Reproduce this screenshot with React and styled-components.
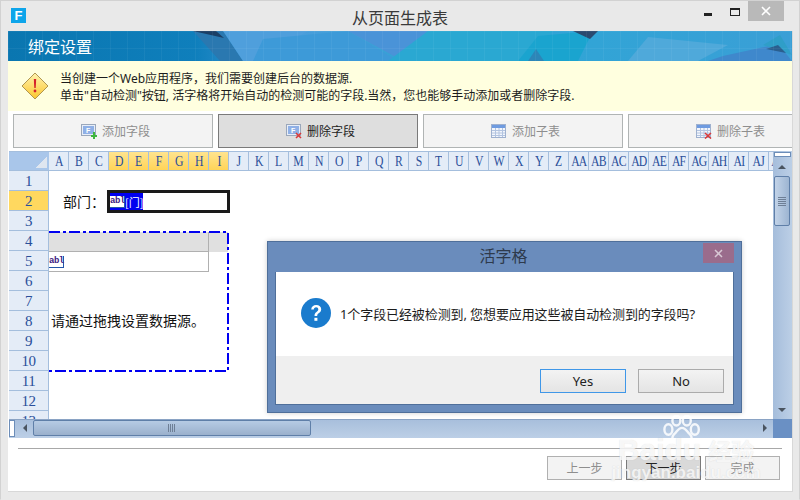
import React from "react";
import styled, { createGlobalStyle } from "styled-components";

const GlobalStyle = createGlobalStyle`
  html, body { margin: 0; padding: 0; background: #e9e9e9; }
  body { font-family: "Noto Sans", "Noto Sans CJK SC", sans-serif; }
  * { box-sizing: border-box; }
`;

const COLUMNS = "ABCDEFGHIJKLMNOPQRSTUVWXYZ"
  .split("")
  .concat(["AA", "AB", "AC", "AD", "AE", "AF", "AG", "AH", "AI", "AJ", "AK"]);
const HOT_COLUMNS = ["D", "E", "F", "G", "H", "I"];
const ROWS = [1, 2, 3, 4, 5, 6, 7, 8, 9, 10, 11, 12, 13];

const FormIcon = ({ badge }) => (
  <svg width="16" height="15" viewBox="0 0 16 15">
    <rect x="0.5" y="0.5" width="14" height="11" fill="#e8eef8" stroke="#9aa7bb" />
    <rect x="2" y="2" width="11" height="8" fill="#8fb0e6" />
    <text x="5" y="9" fontSize="7" fontWeight="700" fill="#fff" fontFamily="Liberation Sans">F</text>
    {badge === "add" && <path d="M10 11h2V8h2v3h2v2h-2v2h-2v-2h-2z" fill="#3fb53f" />}
    {badge === "del" && <path d="M10 9l5 5M15 9l-5 5" stroke="#d93a3a" strokeWidth="1.6" />}
  </svg>
);

const TableIcon = ({ badge }) => (
  <svg width="16" height="15" viewBox="0 0 16 15">
    <rect x="0.5" y="0.5" width="14" height="13" fill="#f3f6fc" stroke="#9fb1cf" />
    <rect x="1" y="1" width="13" height="3" fill="#6f9be0" />
    <path d="M1 6.5h13M1 9h13M1 11.5h13M4.5 4v9M8 4v9M11.5 4v9" stroke="#b3c4e0" />
    {badge === "del" && <path d="M9 9l6 5.5M15 9l-6 5.5" stroke="#d93a3a" strokeWidth="1.6" />}
  </svg>
);

const TOOLS = [
  { label: "添加字段", icon: <FormIcon badge="add" /> },
  { label: "删除字段", icon: <FormIcon badge="del" />, active: true },
  { label: "添加子表", icon: <TableIcon /> },
  { label: "删除子表", icon: <TableIcon badge="del" /> },
];

const Ab = () => <AbBox>abl</AbBox>;

const App = () => (
  <Frame>
    <GlobalStyle />
    <TitleBar>
      <Logo>F</Logo>
      <Title>从页面生成表</Title>
      <MinButton />
      <MaxButton />
      <CloseButton>
        <svg width="10" height="10" viewBox="0 0 10 10">
          <path d="M1 1l8 8M9 1l-8 8" stroke="#fff" strokeWidth="1.6" />
        </svg>
      </CloseButton>
    </TitleBar>

    <Panel>
      <Banner>
        <BannerArt viewBox="0 0 784 30" preserveAspectRatio="none">
          <defs>
            <linearGradient id="bannerBase" x1="0" x2="1" y1="0" y2="0">
              <stop offset="0" stopColor="#0a76b0" />
              <stop offset="0.24" stopColor="#0f7fbc" />
              <stop offset="0.36" stopColor="#4c9ddb" />
              <stop offset="0.55" stopColor="#2ea3d4" />
              <stop offset="0.75" stopColor="#32a4d6" />
              <stop offset="1" stopColor="#3a9fd6" />
            </linearGradient>
            <pattern id="bannerGrid" width="17" height="17" patternUnits="userSpaceOnUse">
              <path d="M17 0H0V17" fill="none" stroke="#fff" strokeOpacity="0.09" />
            </pattern>
          </defs>
          <rect width="784" height="30" fill="url(#bannerBase)" />
          <polygon points="185,0 215,0 235,30 212,30" fill="#2a78b0" />
          <polygon points="185,0 208,0 216,7" fill="#1b3f66" />
          <polygon points="215,0 300,0 250,30 235,30" fill="#4f9fdc" />
          <polygon points="255,8 340,0 390,30 245,30" fill="#3d9ad8" />
          <polygon points="340,0 420,0 395,30" fill="#4a93d8" />
          <polygon points="420,0 545,0 515,30 380,30" fill="#2aa8d2" />
          <polygon points="530,5 585,0 570,30 510,30" fill="#1aa4cf" />
          <polygon points="565,0 590,0 582,8" fill="#2b4a6f" />
          <polygon points="640,6 720,14 690,30 620,30" fill="#4fa9da" />
          <polygon points="715,25 770,13 784,30 700,30" fill="#3f88cc" />
          <polygon points="755,14 772,4 784,24" fill="#2f9ec8" />
          <polygon points="758,18 770,14 778,22" fill="#2a5f8f" />
          <polygon points="520,30 528,18 536,30" fill="#2c86b8" />
          <rect width="784" height="30" fill="url(#bannerGrid)" />
        </BannerArt>
        <BannerTitle>绑定设置</BannerTitle>
      </Banner>

      <Notice>
        <svg width="28" height="28" viewBox="0 0 28 28">
          <defs>
            <linearGradient id="warn" x1="0" x2="0" y1="0" y2="1">
              <stop offset="0" stopColor="#fff3b0" />
              <stop offset="1" stopColor="#fbc62e" />
            </linearGradient>
          </defs>
          <polygon points="14,1 27,14 14,27 1,14" fill="url(#warn)" stroke="#b09650" />
          <path d="M12.8 7h2.4l-.5 9h-1.4z" fill="#d5202a" />
          <circle cx="14" cy="19" r="1.4" fill="#d5202a" />
        </svg>
        <NoticeText>
          <span>当创建一个Web应用程序，我们需要创建后台的数据源.</span>
          <span>单击"自动检测"按钮, 活字格将开始自动的检测可能的字段.当然，您也能够手动添加或者删除字段.</span>
        </NoticeText>
      </Notice>

      <Toolbar>
        {TOOLS.map((tool) => (
          <ToolButton key={tool.label} $active={tool.active}>
            {tool.icon}
            {tool.label}
          </ToolButton>
        ))}
      </Toolbar>

      <Sheet>
        <SheetMain>
          <ColumnBar>
            <Corner />
            {COLUMNS.map((c) => (
              <ColumnHead key={c} $hot={HOT_COLUMNS.includes(c)}>
                <ColumnName>{c}</ColumnName>
              </ColumnHead>
            ))}
          </ColumnBar>
          <SheetBody>
            {ROWS.map((r) => (
              <RowHead key={r} $row={r} $hot={r === 2}>
                {r}
              </RowHead>
            ))}
            <FieldLabel>部门：</FieldLabel>
            <FieldBox>
              <FieldSelection>
                <Ab />
                <span>[门]</span>
              </FieldSelection>
            </FieldBox>
            <DropZone>
              <DropOutline width="180" height="141" viewBox="0 0 180 141">
                <path d="M0 1H179V140H0" fill="none" stroke="#0000f0" strokeWidth="2" strokeDasharray="11 3 3 3" />
              </DropOutline>
              <TableHeadRow>
                <TableHeadCell />
              </TableHeadRow>
              <TableBodyRow>
                <Ab />
              </TableBodyRow>
              <DropHint>请通过拖拽设置数据源。</DropHint>
            </DropZone>
          </SheetBody>
        </SheetMain>

        <VScroll>
          <VGrip />
          <TriangleUp />
          <VThumb>
            <GripLines />
          </VThumb>
          <TriangleDown />
        </VScroll>

        <HScroll>
          <HGrip />
          <TriangleLeft />
          <HThumb>
            <GripBars />
          </HThumb>
          <TriangleRight />
        </HScroll>
        <ScrollCorner />
      </Sheet>

      <Footer>
        <FooterRule />
        <FooterButtons>
          <StepButton>上一步</StepButton>
          <StepButton $active>下一步</StepButton>
          <StepButton>完成</StepButton>
        </FooterButtons>
      </Footer>
    </Panel>

    <Dialog>
      <DialogTitle>
        活字格
        <DialogClose>
          <svg width="9" height="9" viewBox="0 0 9 9">
            <path d="M1 1l7 7M8 1l-7 7" stroke="#d8c8d4" strokeWidth="1.5" />
          </svg>
        </DialogClose>
      </DialogTitle>
      <DialogBody>
        <DialogMessage>
          <svg width="30" height="30" viewBox="0 0 30 30">
            <circle cx="15" cy="15" r="15" fill="#1a7bcd" />
            <path d="M10.2 11.6c.2-3 2.2-4.6 5-4.6 3 0 5 1.700 5 4.200 0 2-1.100 3-2.500 4-1.200.9-1.500 1.400-1.500 2.800h-2.700c0-2.100.5-3 2-4.100 1.200-.9 1.800-1.500 1.800-2.600 0-1.200-.9-2-2.200-2-1.400 0-2.200.9-2.300 2.300z" fill="#fff" />
            <rect x="13.400" y="19.800" width="3" height="3" fill="#fff" />
          </svg>
          <span>1个字段已经被检测到, 您想要应用这些被自动检测到的字段吗?</span>
        </DialogMessage>
        <DialogActions>
          <DialogButton $primary>Yes</DialogButton>
          <DialogButton>No</DialogButton>
        </DialogActions>
      </DialogBody>
    </Dialog>

    <Watermark>
      <WatermarkPaw width="40" height="29" viewBox="0 0 50 36">
        <g fill="none" stroke="#fff" strokeOpacity="0.85" strokeWidth="3">
          <ellipse cx="8" cy="18" rx="5" ry="6.500" />
          <ellipse cx="18" cy="7" rx="5" ry="6" />
          <ellipse cx="31" cy="7" rx="5" ry="6" />
          <ellipse cx="41" cy="18" rx="5" ry="6.500" />
          <path d="M25 16c-5 0-6 5-10 8-4 4-1 11 5 9 3-1 7-1 10 0 6 2 9-5 5-9-4-3-5-8-10-8z" />
        </g>
      </WatermarkPaw>
      <WatermarkBrand>
        Baidu<WatermarkCn>经验</WatermarkCn>
      </WatermarkBrand>
      <WatermarkUrl>jingyan.baidu.com</WatermarkUrl>
    </Watermark>
  </Frame>
);

export default App;

const Frame = styled.div`
  position: relative;
  width: 800px;
  height: 500px;
  overflow: hidden;
  display: flex;
  flex-direction: column;
  background: #e9e9e9;
  border: 1px solid #d2d2d2;
  border-bottom-color: #e9e9e9;
`;

const TitleBar = styled.div`
  position: relative;
  flex: none;
  height: 30px;
  display: flex;
  align-items: flex-start;
`;

const Logo = styled.div`
  width: 15px;
  height: 15px;
  margin: 7px 0 0 10px;
  background: #0ea5ea;
  color: #fff;
  font: 700 13px/15px "Liberation Sans", sans-serif;
  text-align: center;
`;

const Title = styled.div`
  position: absolute;
  left: 351px;
  top: 4px;
  font: 16px/24px "Noto Sans CJK SC", sans-serif;
  color: #3a3a3a;
`;

const MinButton = styled.div`
  margin: 12px 0 0 678px;
  width: 8px;
  height: 3px;
  background: #222;
`;

const MaxButton = styled.div`
  margin: 7px 0 0 18px;
  width: 10px;
  height: 8px;
  border: 1px solid #222;
  border-top-width: 2px;
`;

const CloseButton = styled.div`
  margin-left: 8px;
  width: 36px;
  height: 20px;
  background: #b9b9b9;
  display: flex;
  align-items: center;
  justify-content: center;
`;

const Panel = styled.div`
  flex: none;
  width: 785px;
  height: 461px;
  margin-left: 7px;
  background: #fff;
  border-bottom: 1px solid #d8d8d8;
  border-right: 1px solid #d8d8d8;
  display: flex;
  flex-direction: column;
`;

const Banner = styled.div`
  position: relative;
  flex: none;
  height: 30px;
  display: flex;
  align-items: center;
  padding-left: 20px;
`;

const BannerArt = styled.svg`
  position: absolute;
  inset: 0;
  width: 100%;
  height: 100%;
`;

const BannerTitle = styled.div`
  position: relative;
  font: 16px/24px "Noto Sans CJK SC", sans-serif;
  color: #fff;
`;

const Notice = styled.div`
  flex: none;
  height: 50px;
  background: #ffffdf;
  display: flex;
  align-items: center;
  gap: 11px;
  padding: 0 0 0 13px;
`;

const NoticeText = styled.div`
  display: flex;
  flex-direction: column;
  padding-top: 2px;
  font-size: 12px;
  line-height: 17px;
  color: #1c1c1c;
  white-space: nowrap;
`;

const Toolbar = styled.div`
  flex: none;
  display: flex;
  gap: 5px;
  padding: 3px 0 0 5px;
  height: 40px;
  overflow: hidden;
`;

const ToolButton = styled.div`
  flex: none;
  width: 200px;
  height: 34px;
  padding-left: 5px;
  display: flex;
  align-items: center;
  justify-content: center;
  gap: 5px;
  font: 12px/16px "Noto Sans CJK SC", sans-serif;
  color: ${({ $active }) => ($active ? "#222" : "#8e8e8e")};
  background: ${({ $active }) => ($active ? "#dedede" : "#f3f3f3")};
  border: 1px solid ${({ $active }) => ($active ? "#7a7a7a" : "#b0b4b4")};
`;

const Sheet = styled.div`
  flex: none;
  display: grid;
  grid-template-columns: 764px 19px;
  grid-template-rows: 268px 19px;
  width: 783px;
  margin-left: 1px;
`;

const SheetMain = styled.div`
  overflow: hidden;
  display: flex;
  flex-direction: column;
`;

const ColumnBar = styled.div`
  flex: none;
  display: flex;
  height: 20px;
  border-top: 1px solid #a4bedd;
`;

const Corner = styled.div`
  flex: none;
  width: 40px;
  height: 19px;
  background: linear-gradient(135deg, transparent 50%, #dfe6f0 50%) no-repeat right 2px bottom 2px / 12px 12px,
    #a9c6ea;
  border-bottom: 1px solid #a4bedd;
`;

const ColumnHead = styled.div`
  flex: none;
  width: 20px;
  height: 19px;
  display: flex;
  justify-content: center;
  background: ${({ $hot }) => ($hot ? "linear-gradient(#ffe48f, #ffd458)" : "#e4ecf7")};
  border-right: 1px solid #a4bedd;
  border-bottom: 1px solid #a4bedd;
`;

const ColumnName = styled.span`
  flex: none;
  font: 15px/18px "Liberation Serif", serif;
  letter-spacing: -1px;
  color: #2a4f9a;
  transform: scaleX(0.78);
`;

const SheetBody = styled.div`
  flex: 1;
  display: grid;
  grid-template-columns: 40px repeat(36, 20px);
  grid-auto-rows: 20px;
  overflow: hidden;
`;

const RowHead = styled.div`
  grid-column: 1;
  grid-row: ${({ $row }) => $row};
  text-align: center;
  font: 15px/20px "Liberation Serif", serif;
  letter-spacing: -0.5px;
  color: #2a4f9a;
  background: ${({ $hot }) => ($hot ? "#ffd85f" : "#e4ecf7")};
  border-right: 1px solid #a4bedd;
  border-bottom: 1px solid #a4bedd;
`;

const FieldLabel = styled.div`
  grid-column: 2 / span 3;
  grid-row: 2;
  padding-left: 14px;
  font: 14px/20px "Noto Sans CJK SC", sans-serif;
  color: #111;
  white-space: nowrap;
`;

const FieldBox = styled.div`
  grid-column: 5 / span 6;
  grid-row: 2;
  margin: -1px -1px -2px -2px;
  display: flex;
  align-items: center;
  border: 3px solid #1a1a1a;
  background: #fff;
`;

const FieldSelection = styled.div`
  display: flex;
  align-items: center;
  height: 17px;
  background: #0000f0;
  color: #fff;
  font: 11px/16px "Noto Sans CJK SC", sans-serif;
  white-space: nowrap;
`;

const AbBox = styled.span`
  display: inline-block;
  flex: none;
  height: 12px;
  width: 15px;
  text-align: center;
  background: #fff;
  border-right: 1px solid #2456a8;
  border-bottom: 1px solid #2456a8;
  color: #3d1a80;
  font: 700 9px/11px "Liberation Mono", monospace;
  letter-spacing: -0.5px;
`;

const DropZone = styled.div`
  position: relative;
  grid-column: 2 / span 9;
  grid-row: 4 / span 7;
  height: 141px;
  display: flex;
  flex-direction: column;
`;

const DropOutline = styled.svg`
  position: absolute;
  left: 0;
  top: 0;
`;

const TableHeadRow = styled.div`
  flex: none;
  height: 20px;
  margin-top: 1px;
  background: #e0e0e0;
  width: 179px;
`;

const TableHeadCell = styled.div`
  width: 160px;
  height: 100%;
  border-right: 1px solid #b0b0b0;
  border-bottom: 1px solid #b0b0b0;
`;

const TableBodyRow = styled.div`
  flex: none;
  width: 160px;
  height: 20px;
  border-right: 1px solid #b0b0b0;
  border-bottom: 1px solid #b0b0b0;
  display: flex;
  align-items: center;
`;

const DropHint = styled.div`
  margin: 38px 0 0 2px;
  font: 14px/20px "Noto Sans CJK SC", sans-serif;
  color: #111;
  white-space: nowrap;
`;

const VScroll = styled.div`
  position: relative;
  background: linear-gradient(90deg, #a5bddb, #bccfe6);
`;

const VGrip = styled.div`
  position: absolute;
  left: 1px;
  right: 1px;
  top: 1px;
  height: 5px;
  border: 1px solid #6c8db8;
  background: #fff;
`;

const VThumb = styled.div`
  position: absolute;
  left: 1px;
  width: 16px;
  top: 25px;
  height: 50px;
  border: 1px solid #5f7fa8;
  border-radius: 2px;
  background: linear-gradient(90deg, #c2d3e8, #9db5d2);
  display: flex;
  align-items: center;
  justify-content: center;
`;

const GripLines = styled.div`
  width: 8px;
  height: 9px;
  background: repeating-linear-gradient(#6e7f96 0 1px, transparent 1px 2px);
`;

const TriangleUp = styled.div`
  position: absolute;
  left: 5px;
  top: 14px;
  border-left: 4px solid transparent;
  border-right: 4px solid transparent;
  border-bottom: 4px solid #4a5460;
`;

const TriangleDown = styled.div`
  position: absolute;
  left: 5px;
  bottom: 7px;
  border-left: 4px solid transparent;
  border-right: 4px solid transparent;
  border-top: 4px solid #4a5460;
`;

const HScroll = styled.div`
  position: relative;
  background: linear-gradient(#a8bfdc, #bccfe6);
  border-top: 1px solid #8aa3c4;
`;

const HGrip = styled.div`
  position: absolute;
  left: 0;
  top: 0;
  width: 6px;
  height: 17px;
  border: 1px solid #6c8db8;
  background: #fff;
`;

const HThumb = styled.div`
  position: absolute;
  left: 24px;
  top: 0;
  width: 278px;
  height: 16px;
  border: 1px solid #5f7fa8;
  border-radius: 2px;
  background: linear-gradient(#b6cbe4, #9ab0cc);
  display: flex;
  align-items: center;
  justify-content: center;
`;

const GripBars = styled.div`
  width: 8px;
  height: 8px;
  background: repeating-linear-gradient(90deg, #6e7f96 0 1px, transparent 1px 2px);
`;

const TriangleLeft = styled.div`
  position: absolute;
  left: 14px;
  top: 4px;
  border-top: 4px solid transparent;
  border-bottom: 4px solid transparent;
  border-right: 4px solid #4a5460;
`;

const TriangleRight = styled.div`
  position: absolute;
  right: 6px;
  top: 4px;
  border-top: 4px solid transparent;
  border-bottom: 4px solid transparent;
  border-left: 4px solid #4a5460;
`;

const ScrollCorner = styled.div`
  background: #6a90c4;
`;

const Footer = styled.div`
  flex: 1;
  display: flex;
  flex-direction: column;
  padding: 10px 10px 0;
`;

const FooterRule = styled.div`
  height: 1px;
  background: #a8a8a8;
`;

const FooterButtons = styled.div`
  display: flex;
  justify-content: flex-end;
  gap: 4px;
  margin-top: 7px;
  padding-right: 2px;
`;

const StepButton = styled.div`
  width: 75px;
  height: 24px;
  text-align: center;
  font: 12px/22px "Noto Sans CJK SC", sans-serif;
  color: ${({ $active }) => ($active ? "#222" : "#8e8e8e")};
  background: ${({ $active }) => ($active ? "#d9d9d9" : "#f3f3f3")};
  border: 1px solid ${({ $active }) => ($active ? "#7a7a7a" : "#b0b0b0")};
`;

const Dialog = styled.div`
  position: absolute;
  left: 266px;
  top: 240px;
  width: 475px;
  height: 172px;
  padding: 0 7px 7px;
  display: flex;
  flex-direction: column;
  background: #6a8cbc;
  border: 1px solid #4f6f9a;
  box-shadow: 0 0 5px rgba(0, 0, 0, 0.2);
`;

const DialogTitle = styled.div`
  position: relative;
  flex: none;
  height: 30px;
  padding: 0 2px 0 0;
  text-align: center;
  font: 16px/27px "Noto Sans CJK SC", sans-serif;
  color: #2e3a4c;
`;

const DialogClose = styled.div`
  position: absolute;
  right: 0;
  top: 1px;
  width: 31px;
  height: 20px;
  background: #9a6c8c;
  display: flex;
  align-items: center;
  justify-content: center;
`;

const DialogBody = styled.div`
  flex: 1;
  display: flex;
  flex-direction: column;
  border: 1px solid #4f6f9a;
  border-top: none;
  background: #efefef;
`;

const DialogMessage = styled.div`
  flex: none;
  height: 84px;
  background: #fff;
  display: flex;
  align-items: center;
  gap: 9px;
  padding: 0 0 2px 25px;
  font-size: 13px;
  letter-spacing: -0.1px;
  color: #1c1c1c;
  white-space: nowrap;
`;

const DialogActions = styled.div`
  flex: 1;
  display: flex;
  justify-content: flex-end;
  gap: 12px;
  padding: 13px 9px 0 0;
`;

const DialogButton = styled.div`
  width: 86px;
  height: 24px;
  text-align: center;
  font: 13px/22px "Noto Sans", sans-serif;
  color: #222;
  background: linear-gradient(#f3f3f3, #e4e4e4);
  border: 1px solid ${({ $primary }) => ($primary ? "#3f97e8" : "#ababab")};
`;

const Watermark = styled.div`
  position: absolute;
  left: 612px;
  top: 414px;
  width: 146px;
  display: flex;
  flex-direction: column;
  align-items: center;
  pointer-events: none;
`;

const WatermarkPaw = styled.svg`
  margin-right: 8px;
`;

const WatermarkBrand = styled.div`
  margin-top: -6px;
  display: flex;
  align-items: center;
  gap: 7px;
  font: 700 30px/24px "Liberation Sans", sans-serif;
  color: rgba(255, 255, 255, 0.8);
  text-shadow: 0 0 1px rgba(140, 140, 140, 0.3);
  white-space: nowrap;
`;

const WatermarkCn = styled.span`
  font: 700 23px/24px "Noto Sans CJK SC", sans-serif;
`;

const WatermarkUrl = styled.div`
  margin-top: 2px;
  font: 700 17px/18px "Liberation Sans", sans-serif;
  color: rgba(255, 255, 255, 0.8);
  text-shadow: 0 0 1px rgba(140, 140, 140, 0.3);
  white-space: nowrap;
`;
